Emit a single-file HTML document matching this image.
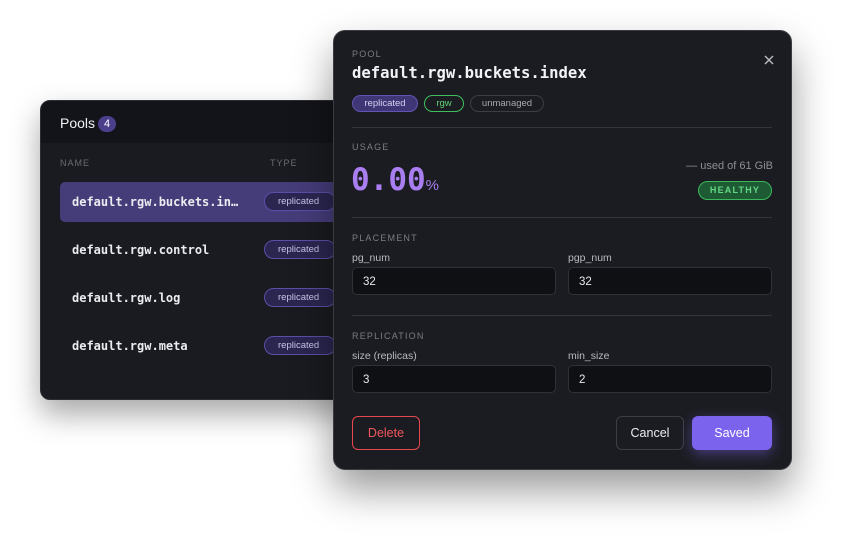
<!DOCTYPE html>
<html><head><style>
*{box-sizing:border-box;margin:0;padding:0}
body{width:852px;height:537px;background:#fff;position:relative;overflow:hidden;font-family:"Liberation Sans",sans-serif}
.mono{font-family:"DejaVu Sans Mono","Liberation Mono",monospace}
.back{position:absolute;left:40px;top:100px;width:320px;height:300px;background:#1a1b20;border-radius:10px;overflow:hidden;box-shadow:0 14px 30px rgba(0,0,0,.35);border:1px solid #2c2d33}
.bh{height:42px;background:#131419;color:#f2f2f4;font-size:14px;padding:14px 0 0 19px}
.cnt{display:inline-block;width:18px;height:16px;border-radius:8px;background:#4b3f8c;color:#fff;font-size:11px;text-align:center;line-height:16px;margin-left:3px;vertical-align:1px}
.th{position:absolute;top:57px;font-size:9px;letter-spacing:1px;color:#6a6b73}
.row{position:absolute;left:19px;width:300px;height:40px;border-radius:5px}
.row .n{position:absolute;left:12px;top:13px;font-size:12px;font-weight:bold;color:#ececf0}
.pill{position:absolute;left:204px;top:10px;width:72px;height:19px;border:1px solid #5b4ea8;background:#2b2650;border-radius:10px;color:#c9c4ea;font-size:9.5px;line-height:17px;padding-left:13px;font-family:"Liberation Sans",sans-serif}
.modal{position:absolute;left:333px;top:30px;width:459px;height:440px;background:#1b1c21;border:1px solid #3b3c42;border-radius:12px;box-shadow:0 20px 40px rgba(0,0,0,.4)}
.w{position:absolute;left:-1px;top:0px;width:459px;height:440px}
.lbl{position:absolute;left:19px;font-size:9px;letter-spacing:1.2px;color:#7b7c84}
.hr{position:absolute;left:19px;width:420px;height:1px;background:#34353b}
.tag{position:absolute;top:64px;height:17px;border-radius:9px;font-size:9.5px;line-height:15px;text-align:center}
.fl{position:absolute;font-size:10.5px;color:#b9bac0}
.in{position:absolute;width:204px;height:28px;background:#0f1014;border:1px solid #303137;border-radius:5px;color:#e8e8ec;font-size:11.5px;padding:8px 0 0 10px}
.btn{position:absolute;top:385px;height:34px;border-radius:6px;font-size:12.5px;text-align:center;line-height:32px}
</style></head><body>
<div class="back">
 <div class="bh">Pools<span class="cnt">4</span></div>
 <div class="th" style="left:19px">NAME</div>
 <div class="th" style="left:229px">TYPE</div>
 <div class="row mono" style="top:81px;background:#453c7a"><span class="n">default.rgw.buckets.in…</span><span class="pill">replicated</span></div>
 <div class="row mono" style="top:129px"><span class="n">default.rgw.control</span><span class="pill">replicated</span></div>
 <div class="row mono" style="top:177px"><span class="n">default.rgw.log</span><span class="pill">replicated</span></div>
 <div class="row mono" style="top:225px"><span class="n">default.rgw.meta</span><span class="pill">replicated</span></div>
</div>
<div class="modal"><div class="w">
 <div class="lbl" style="top:18px">POOL</div>
 <div class="mono" style="position:absolute;left:19px;top:33px;font-size:15.6px;font-weight:bold;color:#f3f3f6">default.rgw.buckets.index</div>
 <svg style="position:absolute;left:431px;top:24px" width="10" height="10" viewBox="0 0 10 10"><path d="M1 1L9 9M9 1L1 9" stroke="#b8b9c0" stroke-width="1.5"/></svg>
 <div class="tag" style="left:19px;width:66px;background:#3f3676;border:1px solid #6253b4;color:#d6d2f2">replicated</div>
 <div class="tag" style="left:91px;width:40px;border:1px solid #3fbf5c;color:#5fd57a">rgw</div>
 <div class="tag" style="left:137px;width:74px;border:1px solid #3d3e44;color:#a9aab0">unmanaged</div>
 <div class="hr" style="top:96px"></div>
 <div class="lbl" style="top:111px">USAGE</div>
 <div class="mono" style="position:absolute;left:18px;top:131px;font-size:31px;font-weight:bold;color:#a97ef0">0.00<span style="font-size:15px;font-family:'Liberation Sans',sans-serif;font-weight:normal">%</span></div>
 <div style="position:absolute;right:19px;top:129px;font-size:11px;color:#8d8e95">— used of 61 GiB</div>
 <div style="position:absolute;left:365px;top:150px;width:74px;height:19px;border-radius:10px;background:#1e5a34;border:1px solid #3cb85c;color:#63d884;font-size:9px;font-weight:bold;letter-spacing:1.2px;text-align:center;line-height:17px">HEALTHY</div>
 <div class="hr" style="top:186px"></div>
 <div class="lbl" style="top:202px">PLACEMENT</div>
 <div class="fl" style="left:19px;top:221px">pg_num</div>
 <div class="fl" style="left:235px;top:221px">pgp_num</div>
 <div class="in" style="left:19px;top:236px">32</div>
 <div class="in" style="left:235px;top:236px">32</div>
 <div class="hr" style="top:284px"></div>
 <div class="lbl" style="top:300px">REPLICATION</div>
 <div class="fl" style="left:19px;top:319px">size (replicas)</div>
 <div class="fl" style="left:235px;top:319px">min_size</div>
 <div class="in" style="left:19px;top:334px">3</div>
 <div class="in" style="left:235px;top:334px">2</div>
 <div class="btn" style="left:19px;width:68px;border:1px solid #e5484d;color:#f0575c">Delete</div>
 <div class="btn" style="left:283px;width:68px;border:1px solid #3d3e44;color:#ececf0">Cancel</div>
 <div class="btn" style="left:359px;width:80px;background:#7b63ee;color:#fff;line-height:34px;box-shadow:0 4px 14px rgba(123,99,238,.45)">Saved</div>
</div></div>
</body></html>
